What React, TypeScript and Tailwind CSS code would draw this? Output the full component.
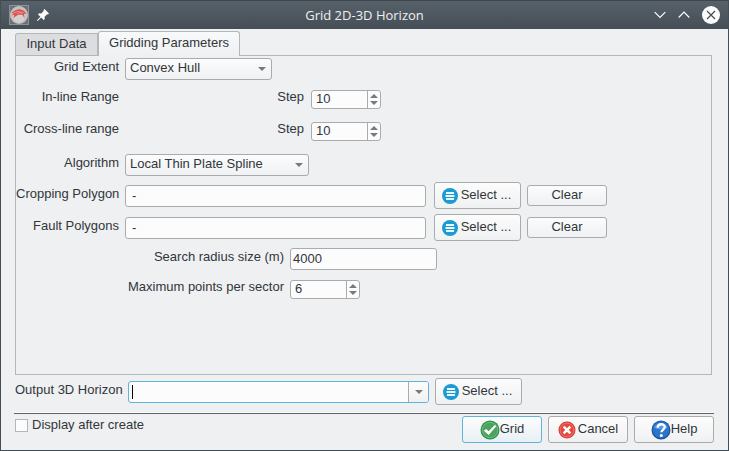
import { useId, useState, type ReactNode } from "react";
import { clsx } from "clsx";

const box = "rounded-[3px] border border-[#a9abad]";
const raised = "bg-linear-to-b from-[#fcfcfc] to-[#f0f1f2]";

function ListIcon() {
  return (
    <svg width="16" height="16" viewBox="0 0 16 16" aria-hidden="true">
      <circle cx="8" cy="8" r="8" fill="#1b9bd0" />
      <path d="M4 4h8v2H4zM3.500 7h9v2h-9zM4 10h8v2H4z" fill="#e9f6fc" />
    </svg>
  );
}

function CheckIcon() {
  return (
    <svg width="20" height="20" viewBox="0 0 20 20" aria-hidden="true">
      <circle cx="10" cy="10" r="9.5" fill="#2f8f4b" />
      <circle cx="10" cy="10" r="7.8" fill="#4aa45c" stroke="#8bc998" strokeWidth=".7" />
      <path d="M3.800 10.800l2.400-1.800 2.400 2.200 6.200-6.200 1.500 1.300-7.600 8.700z" fill="#fff" />
    </svg>
  );
}

function CancelIcon() {
  return (
    <svg width="18" height="18" viewBox="0 0 18 18" aria-hidden="true">
      <circle cx="9" cy="9" r="8.5" fill="#d8352b" />
      <circle cx="9" cy="9" r="7" fill="#e6483b" stroke="#f29086" strokeWidth=".7" />
      <path d="M5.7 5.7l6.600 6.600M12.300 5.700l-6.600 6.600" stroke="#fff" strokeWidth="2.600" />
    </svg>
  );
}

function HelpIcon() {
  return (
    <svg width="20" height="20" viewBox="0 0 20 20" aria-hidden="true">
      <circle cx="10" cy="10" r="9.5" fill="#17539f" />
      <circle cx="10" cy="9.7" r="8.4" fill="#2b74c8" />
      <path d="M3 7.5C5 2 15 2 17 7.5 14 10 6 10 3 7.5z" fill="#5c9be0" />
      <path d="M6.7 7.7c0-4.6 7-4.4 7-.6 0 2.7-3.3 2.700-3.300 5.200" fill="none" stroke="#fff" strokeWidth="2.300" />
      <circle cx="10.3" cy="15.4" r="1.5" fill="#fff" />
    </svg>
  );
}

function AppIcon() {
  return (
    <svg width="20" height="20" viewBox="0 0 20 20" aria-hidden="true">
      <rect x=".5" y=".5" width="19" height="19" fill="#6b7176" stroke="#8d9296" />
      <circle cx="10" cy="10" r="9" fill="#c3c1c1" />
      <circle cx="10" cy="11" r="6.5" fill="#d3cfcf" />
      <path d="M2.500 7.500l3.500-2 4-1.500 4.500 1.500 3 3-2.500.500.500 4.500-1.800-3.500-3.700-.5-3 1.500-2.500 2 .8-3.200-2.800.700 2-1.800z" fill="#d9534f" />
      <path d="M4 8l5-1.500 6 1.500M8 9l3-2 2 2" fill="none" stroke="#eda09d" strokeWidth=".7" />
    </svg>
  );
}

function PinIcon() {
  return (
    <svg width="12" height="12" viewBox="0 0 12 12" fill="#fcfcfc" aria-hidden="true">
      <path d="M7.500 0L12 4.500l-1 1-.9-.2L7.600 7.800l.2 2.200-1.200 1-2.400-2.400L.8 12 0 11.200l3.400-3.400L1 5.400l1-1.200 2.200.2L6.700 1.900 6.500 1z" />
    </svg>
  );
}

function Arrow({ up = false }: { up?: boolean }) {
  return (
    <svg width="8" height="4" viewBox="0 0 8 4" fill="#77797b" aria-hidden="true">
      <path d={up ? "M0 4L4 0l4 4z" : "M0 0l4 4 4-4z"} />
    </svg>
  );
}

function Combo({ id, className, children }: { id: string; className: string; children: ReactNode }) {
  return (
    <div className={clsx("relative h-[22px]", className)}>
      <select id={id} className={clsx(box, raised, "block h-full w-full appearance-none pr-5 pb-[2px] pl-1 leading-4")}>
        {children}
      </select>
      <span className="pointer-events-none absolute top-[9px] right-[6px]">
        <Arrow />
      </span>
    </div>
  );
}

function Spinner({ id, initial }: { id: string; initial: number }) {
  const [value, setValue] = useState(initial);
  return (
    <div className={clsx(box, "flex h-[19px] w-[70px] bg-[#fcfcfc]")}>
      <input
        id={id}
        inputMode="numeric"
        value={value}
        onChange={(e) => setValue(Number(e.target.value) || 0)}
        className="w-0 flex-1 bg-transparent pl-1 leading-4 outline-none"
      />
      <div className="flex w-[13px] flex-col items-center justify-center gap-[3px] border-l border-[#a9abad]">
        <button type="button" aria-label="Increase" onClick={() => setValue(value + 1)}>
          <Arrow up />
        </button>
        <button type="button" aria-label="Decrease" onClick={() => setValue(value - 1)}>
          <Arrow />
        </button>
      </div>
    </div>
  );
}

function SelectButton() {
  return (
    <button type="button" className={clsx(box, raised, "flex h-[27px] w-[87px] items-center justify-center gap-[3px] pr-[2px]")}>
      <ListIcon />
      <span className="pb-px leading-4">Select ...</span>
    </button>
  );
}

function Label({ id, className, children }: { id: string; className: string; children: ReactNode }) {
  return (
    <label htmlFor={id} className={clsx("shrink-0 pb-1 leading-4 whitespace-nowrap", className)}>
      {children}
    </label>
  );
}

function StepRow({ title, className }: { title: string; className: string }) {
  const id = useId();
  return (
    <div className={clsx("flex items-center", className)}>
      <span className="w-[103px] pb-1 text-right leading-4">{title}</span>
      <Label id={id} className="mr-[7px] w-[185px] text-right">Step</Label>
      <Spinner id={id} initial={10} />
    </div>
  );
}

function PolygonRow({ title, className }: { title: string; className: string }) {
  const id = useId();
  return (
    <div className={clsx("flex items-center", className)}>
      <Label id={id} className="mr-[6px] w-[103px] text-right">{title}</Label>
      <input id={id} defaultValue="-" className={clsx(box, "mr-2 h-[22px] w-[301px] bg-[#fcfcfc] px-[6px]")} />
      <SelectButton />
      <button type="button" className={clsx(box, raised, "ml-[6px] h-[21px] w-20 pb-[2px] leading-4")}>
        Clear
      </button>
    </div>
  );
}

function TitleBar() {
  return (
    <header className="grid h-[29px] grid-cols-[1fr_auto_1fr] items-center border-t border-[#3f474d] bg-linear-to-b from-[#57616a] to-[#454e55] px-2 pb-px">
      <div className="flex items-center gap-2">
        <AppIcon />
        <PinIcon />
      </div>
      <h1 className="font-['Open_Sans',sans-serif] text-[13px] leading-4 text-[#eff0f1]">Grid 2D-3D Horizon</h1>
      <div className="flex items-center justify-end gap-3 text-[#fcfcfc]">
        <button type="button" aria-label="Minimize">
          <svg width="12" height="8" viewBox="0 0 12 8" fill="none" stroke="currentColor" strokeWidth="1.2">
            <path d="M.7 1.200L6 6.500l5.300-5.300" />
          </svg>
        </button>
        <button type="button" aria-label="Maximize">
          <svg width="12" height="8" viewBox="0 0 12 8" fill="none" stroke="currentColor" strokeWidth="1.2">
            <path d="M.7 6.500L6 1.200l5.300 5.300" />
          </svg>
        </button>
        <button type="button" aria-label="Close">
          <svg width="18" height="18" viewBox="0 0 18 18">
            <circle cx="9" cy="9" r="9" fill="currentColor" />
            <path d="M5 5l8 8M13 5l-8 8" stroke="#454e55" strokeWidth="1.2" />
          </svg>
        </button>
      </div>
    </header>
  );
}

export default function App() {
  const [output, setOutput] = useState("");
  return (
    <div className="flex min-h-screen flex-col border-x border-b border-[#454e55] bg-[#eff0f1] font-['Liberation_Sans',Arial,sans-serif] text-[13px] text-[#31363b]">
      <TitleBar />
      <main className="flex flex-1 flex-col pt-[2px] pr-[14px] pb-[7px] pl-[13px]">
        <div role="tablist" className="z-10 -mb-px ml-px flex items-end">
          <button
            type="button"
            role="tab"
            aria-selected="false"
            className="mb-px h-[22px] w-[83px] rounded-tl-[3px] border border-b-0 border-[#b4b6b8] bg-[#dcdddf] pb-[2px] leading-4"
          >
            Input Data
          </button>
          <button
            type="button"
            role="tab"
            aria-selected="true"
            className="h-[25px] w-[142px] rounded-t-[3px] border border-b-0 border-[#b4b6b8] bg-linear-to-b from-[#f8f9fa] to-[#eff0f1] pb-[2px] leading-4"
          >
            Gridding Parameters
          </button>
        </div>

        <section role="tabpanel" className="mr-[2px] ml-px flex-1 border border-[#b4b6b8] pt-[2px]">
          <div className="flex items-center">
            <Label id="extent" className="mr-[6px] w-[103px] text-right">Grid Extent</Label>
            <Combo id="extent" className="w-[147px]">
              <option>Convex Hull</option>
            </Combo>
          </div>
          <StepRow title="In-line Range" className="mt-[9px]" />
          <StepRow title="Cross-line range" className="mt-3" />
          <div className="mt-[13px] flex items-center">
            <Label id="algorithm" className="mr-[6px] w-[103px] text-right">Algorithm</Label>
            <Combo id="algorithm" className="w-[184px]">
              <option>Local Thin Plate Spline</option>
            </Combo>
          </div>
          <PolygonRow title="Cropping Polygon" className="mt-[6px]" />
          <PolygonRow title="Fault Polygons" className="mt-[5px]" />
          <div className="mt-[7px] flex items-center">
            <Label id="radius" className="mr-[6px] w-[268px] text-right">Search radius size (m)</Label>
            <input id="radius" defaultValue="4000" className={clsx(box, "h-[22px] w-[147px] bg-[#fcfcfc] px-[2px] pb-[2px]")} />
          </div>
          <div className="mt-[9px] flex items-center">
            <Label id="points" className="mr-[6px] w-[268px] text-right">Maximum points per sector</Label>
            <Spinner id="points" initial={6} />
          </div>
        </section>

        <div className="mt-[3px] flex items-center pl-px">
          <Label id="output" className="w-[113px]">Output 3D Horizon</Label>
          <div className="relative flex h-[22px] w-[301px] rounded-[3px] border border-[#5fb3dc] bg-[#fcfcfc]">
            <input
              id="output"
              value={output}
              onChange={(e) => setOutput(e.target.value)}
              className="w-0 flex-1 bg-transparent px-1 outline-none"
            />
            {output === "" && <span className="pointer-events-none absolute top-[3px] left-[3px] h-[14px] w-px bg-black" />}
            <button
              type="button"
              aria-label="Show horizons"
              className={clsx(raised, "flex w-5 items-center justify-center rounded-r-[2px] border-l border-[#a9abad]")}
            >
              <Arrow />
            </button>
          </div>
          <div className="ml-[6px]">
            <SelectButton />
          </div>
        </div>

        <footer className="mt-2 flex items-start border-t border-[#5d6368] pt-[2px] shadow-[0_-1px_0_#fcfcfc]">
          <label className="flex items-center gap-1 pt-px pl-px leading-4">
            <input type="checkbox" className="size-[13px] appearance-none border border-[#b4b6b8] bg-[#fcfcfc] checked:bg-[#3daee9]" />
            Display after create
          </label>
          <div className="ml-auto flex gap-[6px] leading-4">
            <button
              type="button"
              className="flex h-[27px] w-20 items-center justify-center rounded-[3px] border border-[#5fb3dc] bg-linear-to-b from-[#fcfcfc] to-[#e8f0f5]"
            >
              <CheckIcon />
              <span className="pb-[2px]">Grid</span>
            </button>
            <button type="button" className={clsx(box, raised, "flex h-[27px] w-20 items-center justify-center gap-[2px]")}>
              <CancelIcon />
              <span className="pb-[2px]">Cancel</span>
            </button>
            <button type="button" className={clsx(box, raised, "flex h-[27px] w-20 items-center justify-center")}>
              <HelpIcon />
              <span className="pb-[2px]">Help</span>
            </button>
          </div>
        </footer>
      </main>
    </div>
  );
}
